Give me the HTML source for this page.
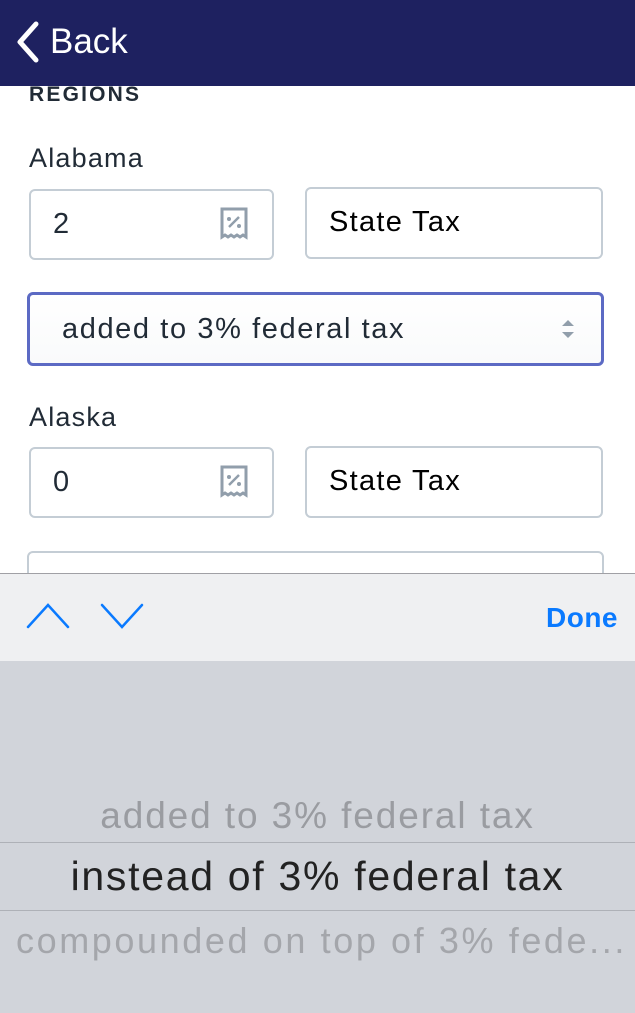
<!DOCTYPE html><html><head><style>
body{margin:0;width:635px;height:1013px;overflow:hidden;background:#fff;font-family:"Liberation Sans",sans-serif;position:relative}
.a{position:absolute}
.in{position:absolute;box-sizing:border-box;border:2px solid #c4cdd5;border-radius:6px;background:#fff;font-size:29px;color:#212b36;line-height:66px;padding-left:22px;letter-spacing:1.3px}
.lbl{position:absolute;left:29px;font-size:27px;color:#212b36;letter-spacing:1.2px}
</style></head><body>
<div class="a" style="left:0;top:0;width:635px;height:86px;background:#1e2160"></div>
<svg class="a" style="left:12px;top:20px" width="30" height="44"><path d="M24 4 L8 22 L24 40" stroke="#fff" stroke-width="5" fill="none" stroke-linecap="round" stroke-linejoin="round"/></svg>
<div class="a" style="left:50px;top:22px;font-size:35px;color:#fff">Back</div>
<div class="a" style="left:29px;top:83px;font-size:21px;font-weight:bold;color:#212b36;letter-spacing:2.2px">REGIONS</div>
<div class="lbl" style="top:143px">Alabama</div>
<div class="in" style="left:29px;top:189px;width:245px;height:71px">2</div>
<div class="in" style="left:305px;top:187px;width:298px;height:72px;color:#000">State Tax</div>
<div class="a" style="left:27px;top:292px;width:577px;height:74px;box-sizing:border-box;border:3px solid #5c6ac4;border-radius:6px;background:linear-gradient(#fff,#f9fafb);font-size:29px;color:#212b36;line-height:68px;padding-left:32px;letter-spacing:1.6px">added to 3% federal tax</div>
<svg class="a" style="left:560px;top:318px" width="16" height="22"><path d="M2 8 L8 2 L14 8Z M2 14 L8 20 L14 14Z" fill="#919eab"/></svg>
<div class="lbl" style="top:402px">Alaska</div>
<div class="in" style="left:29px;top:447px;width:245px;height:71px">0</div>
<div class="in" style="left:305px;top:446px;width:298px;height:72px;color:#000">State Tax</div>
<div class="in" style="left:27px;top:551px;width:577px;height:60px"></div>
<svg class="a" style="left:220px;top:207px" width="28" height="34"><path d="M2 2 H26 V30 l-3-2 -3 2 -3-2 -3 2 -3-2 -3 2 -3-2 -3 2Z" fill="none" stroke="#919eab" stroke-width="3"/><path d="M9 20 L19 10" stroke="#919eab" stroke-width="2.5"/><circle cx="9" cy="12" r="2" fill="#919eab"/><circle cx="19" cy="19" r="2" fill="#919eab"/></svg>
<svg class="a" style="left:220px;top:465px" width="28" height="34"><path d="M2 2 H26 V30 l-3-2 -3 2 -3-2 -3 2 -3-2 -3 2 -3-2 -3 2Z" fill="none" stroke="#919eab" stroke-width="3"/><path d="M9 20 L19 10" stroke="#919eab" stroke-width="2.5"/><circle cx="9" cy="12" r="2" fill="#919eab"/><circle cx="19" cy="19" r="2" fill="#919eab"/></svg>
<div class="a" style="left:0;top:573px;width:635px;height:88px;background:#eff0f2;border-top:1px solid #a0a0a5;box-sizing:border-box"></div>
<svg class="a" style="left:0;top:590px" width="160" height="50"><path d="M28 37 L48 15 L68 37 M102 15 L122 37 L142 15" stroke="#0a7aff" stroke-width="2.5" fill="none" stroke-linecap="round"/></svg>
<div class="a" style="left:546px;top:602px;font-size:28px;font-weight:bold;color:#0a7aff;letter-spacing:0.5px">Done</div>
<div class="a" style="left:0;top:661px;width:635px;height:352px;background:#d1d4da"></div>
<div class="a" style="left:0;top:795px;width:635px;text-align:center;font-size:37px;color:#9a9ca1;letter-spacing:1.9px">added to 3% federal tax</div>
<div class="a" style="left:0;top:842px;width:635px;height:69px;border-top:1px solid #aeb1b7;border-bottom:1px solid #aeb1b7;box-sizing:border-box"></div>
<div class="a" style="left:0;top:853px;width:635px;text-align:center;font-size:41px;color:#222;letter-spacing:1.7px">instead of 3% federal tax</div>
<div class="a" style="left:16px;top:920px;white-space:nowrap;font-size:36px;color:#a4a6ab;letter-spacing:2.6px">compounded on top of 3% fede...</div>
</body></html>
